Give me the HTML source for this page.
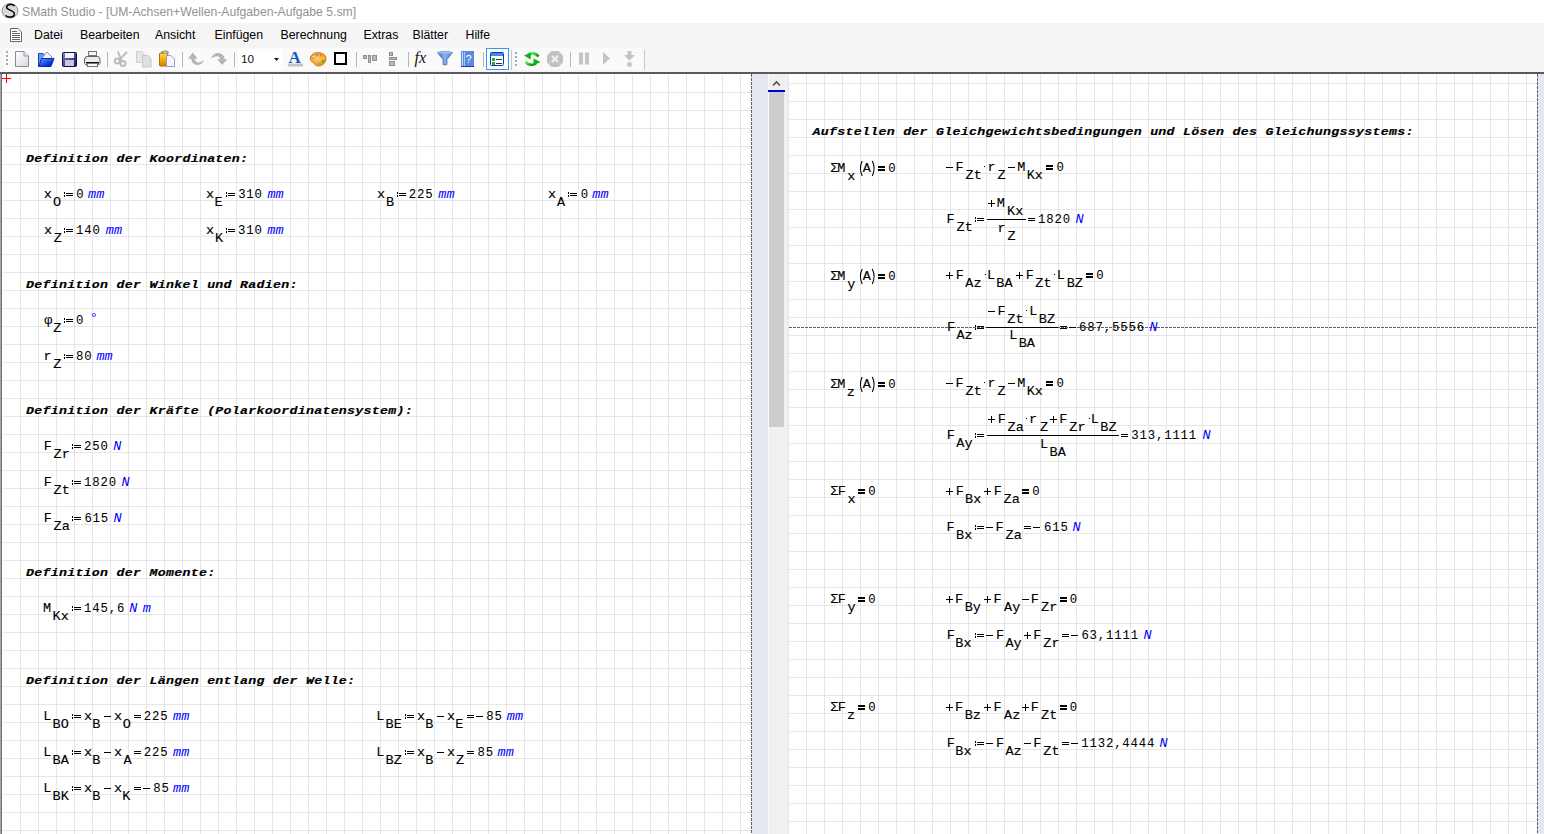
<!DOCTYPE html>
<html><head><meta charset="utf-8">
<style>
html,body{margin:0;padding:0;width:1544px;height:834px;overflow:hidden;background:#f5f5f5;}
body{position:relative;font-family:"Liberation Sans",sans-serif;}
#title{position:absolute;left:0;top:0;width:1544px;height:23px;background:#fff;}
#title .t{position:absolute;left:22px;top:5px;font-size:12.2px;color:#929292;white-space:nowrap;letter-spacing:0px;}
#menu{position:absolute;left:0;top:23px;width:1544px;height:24px;background:#f5f5f5;}
#menu span{position:absolute;top:5px;font-size:12.3px;color:#000;white-space:nowrap;}
#tbarea{position:absolute;left:0;top:46px;width:1544px;height:26px;background:#f5f5f5;}
#darkline{position:absolute;left:0;top:72px;width:1544px;height:2px;background:#5a5a5a;}
svg{position:absolute;left:0;top:0;}
.tn{font-family:"Liberation Mono",monospace;font-size:12.3px;fill:#000;stroke:#000;stroke-width:0.12px;}
.td{font-family:"Liberation Mono",monospace;font-size:12.3px;fill:#000;stroke:#000;stroke-width:0.05px;}
.tb{font-family:"Liberation Mono",monospace;font-size:12.3px;font-weight:bold;fill:#000;}
.th{font-family:"Liberation Mono",monospace;font-size:12.3px;font-weight:bold;font-style:italic;fill:#000;stroke:#000;stroke-width:0.2px;}
.tu{font-family:"Liberation Mono",monospace;font-size:12.3px;font-style:italic;fill:#0000ff;}
.tpar{font-family:"Liberation Sans",sans-serif;font-size:12.3px;fill:#000;}
</style></head><body>
<div id="title"><div class="t">SMath Studio - [UM-Achsen+Wellen-Aufgaben-Aufgabe 5.sm]</div></div>
<div id="menu">
<span style="left:34px">Datei</span>
<span style="left:80px">Bearbeiten</span>
<span style="left:155px">Ansicht</span>
<span style="left:214.5px">Einfügen</span>
<span style="left:280.5px">Berechnung</span>
<span style="left:363.5px">Extras</span>
<span style="left:412.5px">Blätter</span>
<span style="left:465.5px">Hilfe</span>
</div>
<div id="tbarea"></div>
<svg width="1544" height="74" viewBox="0 0 1544 74" style="position:absolute;left:0;top:0">
<defs>
<linearGradient id="pg" x1="0" y1="0" x2="1" y2="1"><stop offset="0" stop-color="#ffffff"/><stop offset="1" stop-color="#d8dbe6"/></linearGradient>
<linearGradient id="fold" x1="0" y1="0" x2="1" y2="1"><stop offset="0" stop-color="#6aa0ff"/><stop offset="0.6" stop-color="#1040e0"/><stop offset="1" stop-color="#001a90"/></linearGradient>
<linearGradient id="flop" x1="0" y1="0" x2="1" y2="1"><stop offset="0" stop-color="#8a8ac8"/><stop offset="1" stop-color="#10105a"/></linearGradient>
<linearGradient id="clip" x1="0" y1="0" x2="0" y2="1"><stop offset="0" stop-color="#ffe23a"/><stop offset="1" stop-color="#e07800"/></linearGradient>
<radialGradient id="pal" cx="0.45" cy="0.45" r="0.6"><stop offset="0" stop-color="#ffd060"/><stop offset="1" stop-color="#f08a10"/></radialGradient>
<linearGradient id="fun" x1="0" y1="0" x2="1" y2="0"><stop offset="0" stop-color="#3a6cc8"/><stop offset="0.5" stop-color="#8fb0e8"/><stop offset="1" stop-color="#4a78c8"/></linearGradient>
<linearGradient id="grn" x1="0" y1="0" x2="1" y2="1"><stop offset="0" stop-color="#60ff60"/><stop offset="1" stop-color="#008a00"/></linearGradient>
</defs>
<!-- toolbar backgrounds -->
<rect x="3" y="48" width="508" height="22" rx="2" fill="#fafafa"/>
<rect x="513" y="48" width="131" height="22" rx="2" fill="#fafafa"/>
<rect x="644" y="50" width="1" height="20" fill="#c8c8c8"/>
<rect x="511" y="50" width="1" height="20" fill="#c8c8c8"/>
<!-- grip -->
<g fill="#a8a8a8"><rect x="6" y="51" width="2" height="2"/><rect x="6" y="55" width="2" height="2"/><rect x="6" y="59" width="2" height="2"/><rect x="6" y="63" width="2" height="2"/></g>
<g fill="#a8a8a8"><rect x="515" y="52" width="2" height="2"/><rect x="515" y="56" width="2" height="2"/><rect x="515" y="60" width="2" height="2"/><rect x="515" y="64" width="2" height="2"/></g>
<!-- new -->
<path d="M15.5 51.5 H24 L28.5 56 V66.5 H15.5 Z" fill="url(#pg)" stroke="#8c8c96" stroke-width="1"/>
<path d="M24 51.5 V56 H28.5" fill="#e8e8f0" stroke="#9a9aa8" stroke-width="1"/>
<!-- open -->
<path d="M38.5 53.5 H43 L44.5 55 H47 V66.5 H38.5 Z" fill="#5aa0f0" stroke="#1a40c8" stroke-width="1"/>
<path d="M41 59 L47 52 L52 57 L49 60 Z" fill="#f4f4ff" stroke="#7070d0" stroke-width="0.8"/>
<path d="M39 66.5 L41.5 58.5 H54 L51 66.5 Z" fill="url(#fold)" stroke="#0a28b0" stroke-width="1"/>
<!-- save -->
<rect x="62.5" y="52.5" width="14" height="14" rx="1" fill="url(#flop)" stroke="#101050" stroke-width="1"/>
<rect x="65" y="53" width="9" height="5" fill="#f4f4fc"/>
<rect x="65" y="60" width="9" height="6" fill="#c8c8e4"/>
<!-- print -->
<rect x="88.5" y="51.5" width="8" height="4" fill="#f4f4f4" stroke="#777" stroke-width="1"/>
<path d="M86 56.5 H98.5 L100 59 V63.5 L98.5 65 H86 L84.5 63.5 V59 Z" fill="#ececec" stroke="#666" stroke-width="1"/>
<rect x="86" y="62" width="13" height="1.6" fill="#111"/>
<rect x="87.5" y="63.5" width="10" height="3" fill="#fafafa" stroke="#777" stroke-width="1"/>
<rect x="85.5" y="58" width="1" height="1" fill="#1a9a3a"/>
<!-- separators -->
<g fill="#b8b8b8"><rect x="107" y="52" width="1" height="15"/><rect x="182" y="52" width="1" height="15"/><rect x="234" y="52" width="1" height="15"/><rect x="356" y="52" width="1" height="15"/><rect x="408" y="52" width="1" height="15"/><rect x="483" y="52" width="1" height="15"/><rect x="570" y="52" width="1" height="15"/></g>
<!-- cut (disabled) -->
<g stroke="#bcbcbc" fill="none" stroke-width="2">
<circle cx="117.3" cy="61" r="2.5"/><circle cx="123" cy="63.5" r="2.5"/>
<path d="M119.5 59.5 L127 52"/><path d="M121.5 61 L118 51.5"/>
</g>
<!-- copy (disabled) -->
<path d="M136.5 51.5 H142 L144 53.5 V62.5 H136.5 Z" fill="#e6e6e6" stroke="#cfcfcf"/>
<path d="M142.5 55.5 H148 L151 58.5 V67 H142.5 Z" fill="#e0e0e0" stroke="#c6c6c6"/>
<!-- paste -->
<rect x="159.5" y="53" width="8" height="13" rx="1" fill="url(#clip)" stroke="#b86a00" stroke-width="1"/>
<path d="M162 54 V52 Q165 50 168 52 V54" fill="none" stroke="#8080a8" stroke-width="1.2"/>
<path d="M166.5 55.5 H171 L174.5 59 V66.5 H166.5 Z" fill="#f6f6ff" stroke="#9a9ac8" stroke-width="1"/>
<!-- undo/redo (disabled) -->
<path d="M188 58.8 L192.7 52.6 L197.6 58.8 Z" fill="#b4b4b4"/>
<path d="M191 58.6 Q192 65.3 197.8 65.1 Q202.3 64.8 204.2 59 Q201.5 62.6 198 62.4 Q195.2 62.2 194.6 58.6 Z" fill="#b4b4b4"/>
<path d="M217.2 59.2 L227.2 59.2 L222.1 65 Z" fill="#b4b4b4"/>
<path d="M210.8 58.6 Q213.5 53 218.3 53.1 Q223.8 53.3 224.8 59.4 L220.4 59.4 Q219.8 56.4 217.6 56.3 Q214.6 56.2 210.8 58.6 Z" fill="#b4b4b4"/>
<!-- combo -->
<rect x="238" y="49" width="45" height="21" fill="#ffffff"/>
<text x="241" y="63" font-family="Liberation Sans" font-size="11.8" fill="#111">10</text>
<path d="M274 58 H279 L276.5 61 Z" fill="#111"/>
<!-- A -->
<rect x="288" y="63.5" width="15" height="3" fill="#c4c4c4"/>
<text x="288.5" y="63" font-family="Liberation Serif" font-weight="bold" font-size="17" fill="#1656c0">A</text>
<!-- palette -->
<path d="M318 52.5 C323 52.5 326.5 55.5 326 59.5 C325.5 63.5 322 66 318 66 C315.5 66 314.5 64 313 62.5 C311.5 61 310 60.5 310.3 58 C310.8 54.8 314 52.5 318 52.5 Z" fill="url(#pal)" stroke="#c87010" stroke-width="0.8"/>
<circle cx="313.3" cy="56.5" r="1.2" fill="#fff" stroke="#806040" stroke-width="0.5"/>
<circle cx="317" cy="54.8" r="1.1" fill="#3aa0ff"/><circle cx="320.5" cy="55.3" r="1" fill="#ff6020"/>
<circle cx="323.5" cy="58" r="1" fill="#ffe020"/><circle cx="323" cy="61.5" r="1.3" fill="#20c020"/><circle cx="319.5" cy="63.3" r="1.1" fill="#b080f0"/>
<!-- square -->
<rect x="335" y="53" width="11" height="11" fill="#fafafa" stroke="#000" stroke-width="2"/>
<!-- align h -->
<g fill="#bababa" stroke="#909090" stroke-width="1">
<rect x="363.5" y="55.5" width="3" height="3"/><rect x="368.5" y="55.5" width="2" height="7"/><rect x="372.5" y="55.5" width="4" height="5"/>
<rect x="389.5" y="52.5" width="3" height="3"/><rect x="389.5" y="57.5" width="7" height="2"/><rect x="389.5" y="61.5" width="5" height="4"/>
</g>
<!-- fx -->
<text x="414.5" y="63" font-family="Liberation Serif" font-style="italic" font-size="16" fill="#111">fx</text>
<!-- funnel -->
<path d="M437.5 52.5 Q445 50 452.5 52.5 L447 59.5 V64.5 Q445 65.5 443 64.5 V59.5 Z" fill="url(#fun)" stroke="#3a64b0" stroke-width="0.7"/>
<ellipse cx="445" cy="52.5" rx="7.3" ry="1.5" fill="#9cb8e8"/>
<!-- help book -->
<rect x="461" y="51" width="13" height="16" fill="#5a8ae0"/>
<rect x="461" y="66" width="13" height="1" fill="#1a3a90"/>
<rect x="462" y="52" width="1" height="14" fill="#c8dcff"/><rect x="464" y="52" width="1" height="14" fill="#a8c4f8"/>
<text x="465.5" y="63" font-family="Liberation Sans" font-size="11" fill="#fff">?</text>
<!-- selected button -->
<rect x="486.5" y="48.5" width="22" height="21" fill="#fdfdfd" stroke="#3399ff" stroke-width="1"/>
<rect x="490.5" y="52.5" width="13" height="13" rx="1" fill="#fff" stroke="#0a3ca8" stroke-width="1"/>
<rect x="491" y="53" width="12" height="3" fill="#3c8cf0"/>
<rect x="492" y="58" width="3" height="3" fill="#3aa03a"/><rect x="492" y="62" width="3" height="3" fill="#3aa03a"/>
<rect x="496" y="59" width="6" height="1" fill="#333"/><rect x="496" y="63" width="6" height="1" fill="#333"/>
<!-- refresh -->
<path d="M538.5 56.5 A7 6 0 0 0 528 54.5" stroke="url(#grn)" stroke-width="2.6" fill="none"/>
<path d="M524 55.5 L531 52.5 L530.5 59.5 Z" fill="#10b010"/>
<path d="M525.5 61.5 A7 6 0 0 0 536 63.5" stroke="url(#grn)" stroke-width="2.6" fill="none"/>
<path d="M540.5 62 L533.5 65.5 L533.5 58.5 Z" fill="#10b010"/>
<!-- stop (disabled) -->
<path d="M551.5 51 H558.5 L563 55.5 V62.5 L558.5 67 H551.5 L547 62.5 V55.5 Z" fill="#c2c2c2"/>
<path d="M552 56 L558 62 M558 56 L552 62" stroke="#f0f0f0" stroke-width="2.2"/>
<!-- pause -->
<rect x="579" y="52.5" width="4" height="12" fill="#c4c4c4"/><rect x="585" y="52.5" width="4" height="12" fill="#c4c4c4"/>
<!-- play -->
<path d="M603 52 L610 58.5 L603 64.8 Z" fill="#c4c4c4"/>
<!-- step -->
<path d="M627.5 51 H631.5 V55 H635 L629.5 60.8 L624 55 H627.5 Z" fill="#c4c4c4"/>
<circle cx="629.5" cy="64.5" r="2.4" fill="#c4c4c4"/>
<!-- S logo -->
<ellipse cx="10" cy="10.8" rx="8" ry="7.2" fill="#dadada" stroke="#8a8a8a" stroke-width="0.9"/>
<path d="M14.6 6.2 C13.2 3.9 7.2 3.9 6.6 7.2 C6.1 10 14.4 10.3 14.4 13.9 C14.4 17.6 7.4 17.9 5.6 15.4" stroke="#000" stroke-width="1.5" fill="none"/>
<!-- menu doc icon -->
<path d="M10.5 28.5 H18 L21.5 32 V41.5 H10.5 Z" fill="#fff" stroke="#666" stroke-width="1"/>
<g fill="#666"><rect x="12" y="31" width="5" height="1"/><rect x="12" y="33" width="8" height="1"/><rect x="12" y="35" width="8" height="1"/><rect x="12" y="37" width="8" height="1"/><rect x="12" y="39" width="8" height="1"/></g>
</svg>

<div id="darkline"></div>
<svg width="1544" height="834" viewBox="0 0 1544 834">
<defs>
<pattern id="gridL" patternUnits="userSpaceOnUse" x="2" y="74" width="18" height="18">
<rect x="0" y="0" width="18" height="1" fill="#e6e6e6"/><rect x="0" y="0" width="1" height="18" fill="#e6e6e6"/>
</pattern>
<pattern id="gridR" patternUnits="userSpaceOnUse" x="788" y="83" width="18" height="18">
<rect x="0" y="0" width="18" height="1" fill="#e6e6e6"/><rect x="0" y="0" width="1" height="18" fill="#e6e6e6"/>
</pattern>
<pattern id="dashV" patternUnits="userSpaceOnUse" x="0" y="74" width="4" height="4">
<rect x="0" y="0" width="4" height="3" fill="#606060"/>
</pattern>
<pattern id="dashH" patternUnits="userSpaceOnUse" x="789" y="0" width="4" height="4">
<rect x="0" y="0" width="3" height="4" fill="#606060"/>
</pattern>
</defs>
<!-- panes -->
<rect x="0" y="74" width="752" height="760" fill="#fff"/>
<rect x="3" y="75" width="748" height="759" fill="url(#gridL)"/>
<rect x="0" y="74" width="1" height="760" fill="#a8a8a8"/>
<rect x="1" y="74" width="1" height="760" fill="#6e6e6e"/>
<rect x="751" y="74" width="1" height="760" fill="url(#dashV)"/>
<rect x="752" y="74" width="16" height="760" fill="#e5e8ef"/>
<rect x="768" y="74" width="1" height="760" fill="#fafafa"/>
<rect x="769" y="74" width="20" height="760" fill="#f0f0f0"/>
<rect x="769" y="92" width="15" height="335" fill="#cdcdcd"/>
<rect x="768" y="90" width="17" height="2" fill="#0000dd"/>
<path d="M773 85.5 L776.5 82 L780 85.5" stroke="#505050" stroke-width="1.6" fill="none"/>
<rect x="789" y="74" width="748" height="760" fill="#fff"/>
<rect x="788" y="74" width="749" height="760" fill="url(#gridR)"/>
<rect x="1537" y="74" width="1" height="760" fill="url(#dashV)"/>
<rect x="1538" y="74" width="6" height="760" fill="#e5e8ef"/>
<rect x="789" y="327" width="748" height="1" fill="url(#dashH)"/>
<!-- left cross -->
<rect x="2" y="78" width="9" height="1" fill="#ff0000"/>
<rect x="6" y="74" width="1" height="9" fill="#ff0000"/>
<g id="doc">
<text class="th" x="0.00 7.62 15.25 22.87 30.49 38.12 45.74 53.36 60.99 68.61 76.23 83.86 91.48 99.11 106.73 114.35 121.98 129.60 137.22 144.85 152.47 160.09 167.72 175.34 182.96 190.59 198.21" y="0" transform="translate(26.01 162.00) scale(1.080 0.920)">Definition der Koordinaten:</text>
<text class="th" x="0.00 7.62 15.25 22.87 30.49 38.12 45.74 53.36 60.99 68.61 76.23 83.86 91.48 99.11 106.73 114.35 121.98 129.60 137.22 144.85 152.47 160.09 167.72 175.34 182.96 190.59 198.21 205.83 213.46 221.08 228.70 236.33 243.95" y="0" transform="translate(26.01 288.00) scale(1.080 0.920)">Definition der Winkel und Radien:</text>
<text class="th" x="0.00 7.62 15.25 22.87 30.49 38.12 45.74 53.36 60.99 68.61 76.23 83.86 91.48 99.11 106.73 114.35 121.98 129.60 137.22 144.85 152.47 160.09 167.72 175.34 182.96 190.59 198.21 205.83 213.46 221.08 228.70 236.33 243.95 251.57 259.20 266.82 274.44 282.07 289.69 297.32 304.94 312.56 320.19 327.81 335.43 343.06 350.68" y="0" transform="translate(26.01 414.00) scale(1.080 0.920)">Definition der Kräfte (Polarkoordinatensystem):</text>
<text class="th" x="0.00 7.62 15.25 22.87 30.49 38.12 45.74 53.36 60.99 68.61 76.23 83.86 91.48 99.11 106.73 114.35 121.98 129.60 137.22 144.85 152.47 160.09 167.72" y="0" transform="translate(26.01 576.00) scale(1.080 0.920)">Definition der Momente:</text>
<text class="th" x="0.00 7.62 15.25 22.87 30.49 38.12 45.74 53.36 60.99 68.61 76.23 83.86 91.48 99.11 106.73 114.35 121.98 129.60 137.22 144.85 152.47 160.09 167.72 175.34 182.96 190.59 198.21 205.83 213.46 221.08 228.70 236.33 243.95 251.57 259.20 266.82 274.44 282.07 289.69 297.32" y="0" transform="translate(26.01 684.00) scale(1.080 0.920)">Definition der Längen entlang der Welle:</text>
<text class="tn" x="0.00" y="0" transform="translate(43.78 198.00) scale(1.100 1.000)">x</text>
<text class="tn" x="0.00" y="0" transform="translate(53.03 206.00) scale(1.100 1.000)">O</text>
<rect x="64" y="192" width="1" height="2" fill="#000"/>
<rect x="64" y="195" width="1" height="2" fill="#000"/>
<rect x="66" y="193" width="7" height="1" fill="#000"/>
<rect x="66" y="195" width="7" height="1" fill="#000"/>
<text class="td" x="0.00" y="0" transform="translate(76.26 198.00) scale(1.000 1.000)">0</text>
<text class="tu" x="0.00 7.48" y="0" transform="translate(88.00 198.00) scale(1.100 1.000)">mm</text>
<text class="tn" x="0.00" y="0" transform="translate(205.88 198.00) scale(1.100 1.000)">x</text>
<text class="tn" x="0.00" y="0" transform="translate(214.43 206.00) scale(1.100 1.000)">E</text>
<rect x="226" y="192" width="1" height="2" fill="#000"/>
<rect x="226" y="195" width="1" height="2" fill="#000"/>
<rect x="228" y="193" width="7" height="1" fill="#000"/>
<rect x="228" y="195" width="7" height="1" fill="#000"/>
<text class="td" x="0.00 8.23 16.47" y="0" transform="translate(238.13 198.00) scale(1.000 1.000)">310</text>
<text class="tu" x="0.00 7.48" y="0" transform="translate(267.40 198.00) scale(1.100 1.000)">mm</text>
<text class="tn" x="0.00" y="0" transform="translate(377.08 198.00) scale(1.100 1.000)">x</text>
<text class="tn" x="0.00" y="0" transform="translate(385.93 206.00) scale(1.100 1.000)">B</text>
<rect x="397" y="192" width="1" height="2" fill="#000"/>
<rect x="397" y="195" width="1" height="2" fill="#000"/>
<rect x="399" y="193" width="7" height="1" fill="#000"/>
<rect x="399" y="195" width="7" height="1" fill="#000"/>
<text class="td" x="0.00 8.23 16.47" y="0" transform="translate(408.84 198.00) scale(1.000 1.000)">225</text>
<text class="tu" x="0.00 7.48" y="0" transform="translate(438.30 198.00) scale(1.100 1.000)">mm</text>
<text class="tn" x="0.00" y="0" transform="translate(547.88 198.00) scale(1.100 1.000)">x</text>
<text class="tn" x="0.00" y="0" transform="translate(557.00 206.00) scale(1.100 1.000)">A</text>
<rect x="568" y="192" width="1" height="2" fill="#000"/>
<rect x="568" y="195" width="1" height="2" fill="#000"/>
<rect x="570" y="193" width="7" height="1" fill="#000"/>
<rect x="570" y="195" width="7" height="1" fill="#000"/>
<text class="td" x="0.00" y="0" transform="translate(580.66 198.00) scale(1.000 1.000)">0</text>
<text class="tu" x="0.00 7.48" y="0" transform="translate(592.30 198.00) scale(1.100 1.000)">mm</text>
<text class="tn" x="0.00" y="0" transform="translate(44.08 234.00) scale(1.100 1.000)">x</text>
<text class="tn" x="0.00" y="0" transform="translate(53.82 242.00) scale(1.100 1.000)">Z</text>
<rect x="64" y="228" width="1" height="2" fill="#000"/>
<rect x="64" y="231" width="1" height="2" fill="#000"/>
<rect x="66" y="229" width="7" height="1" fill="#000"/>
<rect x="66" y="231" width="7" height="1" fill="#000"/>
<text class="td" x="0.00 8.23 16.47" y="0" transform="translate(76.11 234.00) scale(1.000 1.000)">140</text>
<text class="tu" x="0.00 7.48" y="0" transform="translate(105.70 234.00) scale(1.100 1.000)">mm</text>
<text class="tn" x="0.00" y="0" transform="translate(206.08 234.00) scale(1.100 1.000)">x</text>
<text class="tn" x="0.00" y="0" transform="translate(214.93 242.00) scale(1.100 1.000)">K</text>
<rect x="226" y="228" width="1" height="2" fill="#000"/>
<rect x="226" y="231" width="1" height="2" fill="#000"/>
<rect x="228" y="229" width="7" height="1" fill="#000"/>
<rect x="228" y="231" width="7" height="1" fill="#000"/>
<text class="td" x="0.00 8.23 16.47" y="0" transform="translate(237.93 234.00) scale(1.000 1.000)">310</text>
<text class="tu" x="0.00 7.48" y="0" transform="translate(267.30 234.00) scale(1.100 1.000)">mm</text>
<text class="tn" x="0.00" y="0" transform="translate(44.27 324.00) scale(1.100 1.000)">φ</text>
<text class="tn" x="0.00" y="0" transform="translate(53.32 332.00) scale(1.100 1.000)">Z</text>
<rect x="64" y="318" width="1" height="2" fill="#000"/>
<rect x="64" y="321" width="1" height="2" fill="#000"/>
<rect x="66" y="319" width="7" height="1" fill="#000"/>
<rect x="66" y="321" width="7" height="1" fill="#000"/>
<text class="td" x="0.00" y="0" transform="translate(76.06 324.00) scale(1.000 1.000)">0</text>
<text class="tu" x="0.00" y="0" transform="translate(89.64 322.00) scale(1.100 1.000)">°</text>
<text class="tn" x="0.00" y="0" transform="translate(43.40 360.00) scale(1.100 1.000)">r</text>
<text class="tn" x="0.00" y="0" transform="translate(53.32 368.00) scale(1.100 1.000)">Z</text>
<rect x="64" y="354" width="1" height="2" fill="#000"/>
<rect x="64" y="357" width="1" height="2" fill="#000"/>
<rect x="66" y="355" width="7" height="1" fill="#000"/>
<rect x="66" y="357" width="7" height="1" fill="#000"/>
<text class="td" x="0.00 8.23" y="0" transform="translate(76.00 360.00) scale(1.000 1.000)">80</text>
<text class="tu" x="0.00 7.48" y="0" transform="translate(96.40 360.00) scale(1.100 1.000)">mm</text>
<text class="tn" x="0.00" y="0" transform="translate(43.72 450.00) scale(1.100 1.000)">F</text>
<text class="tn" x="0.00 7.48" y="0" transform="translate(53.52 458.00) scale(1.100 1.000)">Zr</text>
<rect x="72" y="444" width="1" height="2" fill="#000"/>
<rect x="72" y="447" width="1" height="2" fill="#000"/>
<rect x="74" y="445" width="7" height="1" fill="#000"/>
<rect x="74" y="447" width="7" height="1" fill="#000"/>
<text class="td" x="0.00 8.23 16.47" y="0" transform="translate(84.04 450.00) scale(1.000 1.000)">250</text>
<text class="tu" x="0.00" y="0" transform="translate(113.32 450.00) scale(1.100 1.000)">N</text>
<text class="tn" x="0.00" y="0" transform="translate(43.72 486.00) scale(1.100 1.000)">F</text>
<text class="tn" x="0.00 7.48" y="0" transform="translate(53.52 494.00) scale(1.100 1.000)">Zt</text>
<rect x="72" y="480" width="1" height="2" fill="#000"/>
<rect x="72" y="483" width="1" height="2" fill="#000"/>
<rect x="74" y="481" width="7" height="1" fill="#000"/>
<rect x="74" y="483" width="7" height="1" fill="#000"/>
<text class="td" x="0.00 8.23 16.47 24.70" y="0" transform="translate(84.11 486.00) scale(1.000 1.000)">1820</text>
<text class="tu" x="0.00" y="0" transform="translate(121.62 486.00) scale(1.100 1.000)">N</text>
<text class="tn" x="0.00" y="0" transform="translate(43.72 522.00) scale(1.100 1.000)">F</text>
<text class="tn" x="0.00 7.48" y="0" transform="translate(53.52 530.00) scale(1.100 1.000)">Za</text>
<rect x="72" y="516" width="1" height="2" fill="#000"/>
<rect x="72" y="519" width="1" height="2" fill="#000"/>
<rect x="74" y="517" width="7" height="1" fill="#000"/>
<rect x="74" y="519" width="7" height="1" fill="#000"/>
<text class="td" x="0.00 8.23 16.47" y="0" transform="translate(84.39 522.00) scale(1.000 1.000)">615</text>
<text class="tu" x="0.00" y="0" transform="translate(113.62 522.00) scale(1.100 1.000)">N</text>
<text class="tn" x="0.00" y="0" transform="translate(42.95 612.00) scale(1.100 1.000)">M</text>
<text class="tn" x="0.00 7.48" y="0" transform="translate(52.43 620.00) scale(1.100 1.000)">Kx</text>
<rect x="72" y="606" width="1" height="2" fill="#000"/>
<rect x="72" y="609" width="1" height="2" fill="#000"/>
<rect x="74" y="607" width="7" height="1" fill="#000"/>
<rect x="74" y="609" width="7" height="1" fill="#000"/>
<text class="td" x="0.00 8.23 16.47 24.70 32.93" y="0" transform="translate(84.11 612.00) scale(1.000 1.000)">145,6</text>
<text class="tu" x="0.00" y="0" transform="translate(129.22 612.00) scale(1.100 1.000)">N</text>
<text class="tu" x="0.00" y="0" transform="translate(142.70 612.00) scale(1.100 1.000)">m</text>
<text class="tn" x="0.00" y="0" transform="translate(43.13 720.00) scale(1.100 1.000)">L</text>
<text class="tn" x="0.00 7.48" y="0" transform="translate(52.43 728.00) scale(1.100 1.000)">BO</text>
<rect x="72" y="714" width="1" height="2" fill="#000"/>
<rect x="72" y="717" width="1" height="2" fill="#000"/>
<rect x="74" y="715" width="7" height="1" fill="#000"/>
<rect x="74" y="717" width="7" height="1" fill="#000"/>
<text class="tn" x="0.00" y="0" transform="translate(83.98 720.00) scale(1.100 1.000)">x</text>
<text class="tn" x="0.00" y="0" transform="translate(92.33 728.00) scale(1.100 1.000)">B</text>
<rect x="104" y="716" width="7" height="1" fill="#000"/>
<text class="tn" x="0.00" y="0" transform="translate(113.98 720.00) scale(1.100 1.000)">x</text>
<text class="tn" x="0.00" y="0" transform="translate(122.73 728.00) scale(1.100 1.000)">O</text>
<rect x="134" y="715" width="7" height="1" fill="#000"/>
<rect x="134" y="717" width="7" height="1" fill="#000"/>
<text class="td" x="0.00 8.23 16.47" y="0" transform="translate(143.84 720.00) scale(1.000 1.000)">225</text>
<text class="tu" x="0.00 7.48" y="0" transform="translate(173.00 720.00) scale(1.100 1.000)">mm</text>
<text class="tn" x="0.00" y="0" transform="translate(376.13 720.00) scale(1.100 1.000)">L</text>
<text class="tn" x="0.00 7.48" y="0" transform="translate(385.43 728.00) scale(1.100 1.000)">BE</text>
<rect x="405" y="714" width="1" height="2" fill="#000"/>
<rect x="405" y="717" width="1" height="2" fill="#000"/>
<rect x="407" y="715" width="7" height="1" fill="#000"/>
<rect x="407" y="717" width="7" height="1" fill="#000"/>
<text class="tn" x="0.00" y="0" transform="translate(416.98 720.00) scale(1.100 1.000)">x</text>
<text class="tn" x="0.00" y="0" transform="translate(425.33 728.00) scale(1.100 1.000)">B</text>
<rect x="437" y="716" width="7" height="1" fill="#000"/>
<text class="tn" x="0.00" y="0" transform="translate(446.98 720.00) scale(1.100 1.000)">x</text>
<text class="tn" x="0.00" y="0" transform="translate(455.33 728.00) scale(1.100 1.000)">E</text>
<rect x="467" y="715" width="7" height="1" fill="#000"/>
<rect x="467" y="717" width="7" height="1" fill="#000"/>
<rect x="476" y="716" width="7" height="1" fill="#000"/>
<text class="td" x="0.00 8.23" y="0" transform="translate(486.20 720.00) scale(1.000 1.000)">85</text>
<text class="tu" x="0.00 7.48" y="0" transform="translate(506.80 720.00) scale(1.100 1.000)">mm</text>
<text class="tn" x="0.00" y="0" transform="translate(43.13 756.00) scale(1.100 1.000)">L</text>
<text class="tn" x="0.00 7.48" y="0" transform="translate(52.43 764.00) scale(1.100 1.000)">BA</text>
<rect x="72" y="750" width="1" height="2" fill="#000"/>
<rect x="72" y="753" width="1" height="2" fill="#000"/>
<rect x="74" y="751" width="7" height="1" fill="#000"/>
<rect x="74" y="753" width="7" height="1" fill="#000"/>
<text class="tn" x="0.00" y="0" transform="translate(83.98 756.00) scale(1.100 1.000)">x</text>
<text class="tn" x="0.00" y="0" transform="translate(92.33 764.00) scale(1.100 1.000)">B</text>
<rect x="104" y="752" width="7" height="1" fill="#000"/>
<text class="tn" x="0.00" y="0" transform="translate(113.98 756.00) scale(1.100 1.000)">x</text>
<text class="tn" x="0.00" y="0" transform="translate(123.40 764.00) scale(1.100 1.000)">A</text>
<rect x="134" y="751" width="7" height="1" fill="#000"/>
<rect x="134" y="753" width="7" height="1" fill="#000"/>
<text class="td" x="0.00 8.23 16.47" y="0" transform="translate(143.84 756.00) scale(1.000 1.000)">225</text>
<text class="tu" x="0.00 7.48" y="0" transform="translate(173.00 756.00) scale(1.100 1.000)">mm</text>
<text class="tn" x="0.00" y="0" transform="translate(376.13 756.00) scale(1.100 1.000)">L</text>
<text class="tn" x="0.00 7.48" y="0" transform="translate(385.43 764.00) scale(1.100 1.000)">BZ</text>
<rect x="405" y="750" width="1" height="2" fill="#000"/>
<rect x="405" y="753" width="1" height="2" fill="#000"/>
<rect x="407" y="751" width="7" height="1" fill="#000"/>
<rect x="407" y="753" width="7" height="1" fill="#000"/>
<text class="tn" x="0.00" y="0" transform="translate(416.98 756.00) scale(1.100 1.000)">x</text>
<text class="tn" x="0.00" y="0" transform="translate(425.33 764.00) scale(1.100 1.000)">B</text>
<rect x="437" y="752" width="7" height="1" fill="#000"/>
<text class="tn" x="0.00" y="0" transform="translate(446.98 756.00) scale(1.100 1.000)">x</text>
<text class="tn" x="0.00" y="0" transform="translate(455.92 764.00) scale(1.100 1.000)">Z</text>
<rect x="467" y="751" width="7" height="1" fill="#000"/>
<rect x="467" y="753" width="7" height="1" fill="#000"/>
<text class="td" x="0.00 8.23" y="0" transform="translate(477.50 756.00) scale(1.000 1.000)">85</text>
<text class="tu" x="0.00 7.48" y="0" transform="translate(497.50 756.00) scale(1.100 1.000)">mm</text>
<text class="tn" x="0.00" y="0" transform="translate(43.13 792.00) scale(1.100 1.000)">L</text>
<text class="tn" x="0.00 7.48" y="0" transform="translate(52.43 800.00) scale(1.100 1.000)">BK</text>
<rect x="72" y="786" width="1" height="2" fill="#000"/>
<rect x="72" y="789" width="1" height="2" fill="#000"/>
<rect x="74" y="787" width="7" height="1" fill="#000"/>
<rect x="74" y="789" width="7" height="1" fill="#000"/>
<text class="tn" x="0.00" y="0" transform="translate(83.98 792.00) scale(1.100 1.000)">x</text>
<text class="tn" x="0.00" y="0" transform="translate(92.33 800.00) scale(1.100 1.000)">B</text>
<rect x="104" y="788" width="7" height="1" fill="#000"/>
<text class="tn" x="0.00" y="0" transform="translate(113.98 792.00) scale(1.100 1.000)">x</text>
<text class="tn" x="0.00" y="0" transform="translate(122.33 800.00) scale(1.100 1.000)">K</text>
<rect x="134" y="787" width="7" height="1" fill="#000"/>
<rect x="134" y="789" width="7" height="1" fill="#000"/>
<rect x="143" y="788" width="7" height="1" fill="#000"/>
<text class="td" x="0.00 8.23" y="0" transform="translate(153.20 792.00) scale(1.000 1.000)">85</text>
<text class="tu" x="0.00 7.48" y="0" transform="translate(173.00 792.00) scale(1.100 1.000)">mm</text>
<text class="th" x="0.00 7.62 15.25 22.87 30.49 38.12 45.74 53.36 60.99 68.61 76.23 83.86 91.48 99.11 106.73 114.35 121.98 129.60 137.22 144.85 152.47 160.09 167.72 175.34 182.96 190.59 198.21 205.83 213.46 221.08 228.70 236.33 243.95 251.57 259.20 266.82 274.44 282.07 289.69 297.32 304.94 312.56 320.19 327.81 335.43 343.06 350.68 358.30 365.93 373.55 381.17 388.80 396.42 404.04 411.67 419.29 426.91 434.54 442.16 449.78 457.41 465.03 472.65 480.28 487.90 495.53 503.15 510.77 518.40 526.02 533.64 541.27 548.89" y="0" transform="translate(812.58 135.00) scale(1.080 0.920)">Aufstellen der Gleichgewichtsbedingungen und Lösen des Gleichungssystems:</text>
<text class="tn" x="0.00" y="0" transform="translate(830.29 172.00) scale(1.100 1.000)">Σ</text>
<text class="tn" x="0.00" y="0" transform="translate(837.15 172.00) scale(1.100 1.000)">M</text>
<text class="tn" x="0.00" y="0" transform="translate(847.18 180.00) scale(1.100 1.000)">x</text>
<path d="M862.2 161 Q858.6 168.5 862.2 176" stroke="#000" stroke-width="1.1" fill="none"/>
<text class="tn" x="0.00" y="0" transform="translate(862.80 172.00) scale(1.100 1.000)">A</text>
<path d="M872.3 161 Q875.9 168.5 872.3 176" stroke="#000" stroke-width="1.1" fill="none"/>
<rect x="878" y="166" width="7" height="2" fill="#000"/>
<rect x="878" y="169" width="7" height="2" fill="#000"/>
<text class="td" x="0.00" y="0" transform="translate(888.26 172.00) scale(1.000 1.000)">0</text>
<rect x="946" y="167" width="7" height="1" fill="#000"/>
<text class="tn" x="0.00" y="0" transform="translate(955.52 171.00) scale(1.100 1.000)">F</text>
<text class="tn" x="0.00 7.48" y="0" transform="translate(965.52 179.00) scale(1.100 1.000)">Zt</text>
<rect x="984" y="166" width="1" height="1" fill="#000"/>
<text class="tn" x="0.00" y="0" transform="translate(987.40 171.00) scale(1.100 1.000)">r</text>
<text class="tn" x="0.00" y="0" transform="translate(997.52 179.00) scale(1.100 1.000)">Z</text>
<rect x="1008" y="167" width="7" height="1" fill="#000"/>
<text class="tn" x="0.00" y="0" transform="translate(1017.15 171.00) scale(1.100 1.000)">M</text>
<text class="tn" x="0.00 7.48" y="0" transform="translate(1026.63 179.00) scale(1.100 1.000)">Kx</text>
<rect x="1046" y="165" width="7" height="2" fill="#000"/>
<rect x="1046" y="168" width="7" height="2" fill="#000"/>
<text class="td" x="0.00" y="0" transform="translate(1056.56 171.00) scale(1.000 1.000)">0</text>
<text class="tn" x="0.00" y="0" transform="translate(946.52 223.00) scale(1.100 1.000)">F</text>
<text class="tn" x="0.00 7.48" y="0" transform="translate(956.52 231.00) scale(1.100 1.000)">Zt</text>
<rect x="975" y="217" width="1" height="2" fill="#000"/>
<rect x="975" y="220" width="1" height="2" fill="#000"/>
<rect x="977" y="218" width="7" height="1" fill="#000"/>
<rect x="977" y="220" width="7" height="1" fill="#000"/>
<rect x="987" y="219" width="39" height="1" fill="#000"/>
<rect x="988" y="203" width="7" height="1" fill="#000"/>
<rect x="991" y="200" width="1" height="7" fill="#000"/>
<text class="tn" x="0.00" y="0" transform="translate(996.65 207.00) scale(1.100 1.000)">M</text>
<text class="tn" x="0.00 7.48" y="0" transform="translate(1006.93 215.00) scale(1.100 1.000)">Kx</text>
<text class="tn" x="0.00" y="0" transform="translate(997.40 231.50) scale(1.100 1.000)">r</text>
<text class="tn" x="0.00" y="0" transform="translate(1007.52 239.50) scale(1.100 1.000)">Z</text>
<rect x="1028" y="218" width="7" height="1" fill="#000"/>
<rect x="1028" y="220" width="7" height="1" fill="#000"/>
<text class="td" x="0.00 8.23 16.47 24.70" y="0" transform="translate(1038.11 223.00) scale(1.000 1.000)">1820</text>
<text class="tu" x="0.00" y="0" transform="translate(1075.42 223.00) scale(1.100 1.000)">N</text>
<text class="tn" x="0.00" y="0" transform="translate(830.29 280.00) scale(1.100 1.000)">Σ</text>
<text class="tn" x="0.00" y="0" transform="translate(837.15 280.00) scale(1.100 1.000)">M</text>
<text class="tn" x="0.00" y="0" transform="translate(847.36 288.00) scale(1.100 1.000)">y</text>
<path d="M862.2 269 Q858.6 276.5 862.2 284" stroke="#000" stroke-width="1.1" fill="none"/>
<text class="tn" x="0.00" y="0" transform="translate(862.80 280.00) scale(1.100 1.000)">A</text>
<path d="M872.3 269 Q875.9 276.5 872.3 284" stroke="#000" stroke-width="1.1" fill="none"/>
<rect x="878" y="274" width="7" height="2" fill="#000"/>
<rect x="878" y="277" width="7" height="2" fill="#000"/>
<text class="td" x="0.00" y="0" transform="translate(888.26 280.00) scale(1.000 1.000)">0</text>
<rect x="946" y="275" width="7" height="1" fill="#000"/>
<rect x="949" y="272" width="1" height="7" fill="#000"/>
<text class="tn" x="0.00" y="0" transform="translate(955.72 279.00) scale(1.100 1.000)">F</text>
<text class="tn" x="0.00 7.48" y="0" transform="translate(965.30 287.00) scale(1.100 1.000)">Az</text>
<rect x="985" y="274" width="1" height="1" fill="#000"/>
<text class="tn" x="0.00" y="0" transform="translate(986.93 279.00) scale(1.100 1.000)">L</text>
<text class="tn" x="0.00 7.48" y="0" transform="translate(996.23 287.00) scale(1.100 1.000)">BA</text>
<rect x="1016" y="275" width="7" height="1" fill="#000"/>
<rect x="1019" y="272" width="1" height="7" fill="#000"/>
<text class="tn" x="0.00" y="0" transform="translate(1025.72 279.00) scale(1.100 1.000)">F</text>
<text class="tn" x="0.00 7.48" y="0" transform="translate(1035.32 287.00) scale(1.100 1.000)">Zt</text>
<rect x="1054" y="274" width="1" height="1" fill="#000"/>
<text class="tn" x="0.00" y="0" transform="translate(1056.83 279.00) scale(1.100 1.000)">L</text>
<text class="tn" x="0.00 7.48" y="0" transform="translate(1066.63 287.00) scale(1.100 1.000)">BZ</text>
<rect x="1086" y="273" width="7" height="2" fill="#000"/>
<rect x="1086" y="276" width="7" height="2" fill="#000"/>
<text class="td" x="0.00" y="0" transform="translate(1096.26 279.00) scale(1.000 1.000)">0</text>
<text class="tn" x="0.00" y="0" transform="translate(946.92 331.00) scale(1.100 1.000)">F</text>
<text class="tn" x="0.00 7.48" y="0" transform="translate(956.40 339.00) scale(1.100 1.000)">Az</text>
<rect x="975" y="325" width="1" height="2" fill="#000"/>
<rect x="975" y="328" width="1" height="2" fill="#000"/>
<rect x="977" y="326" width="7" height="1" fill="#000"/>
<rect x="977" y="328" width="7" height="1" fill="#000"/>
<rect x="987" y="327" width="71" height="1" fill="#000"/>
<rect x="988" y="311" width="7" height="1" fill="#000"/>
<text class="tn" x="0.00" y="0" transform="translate(997.52 315.00) scale(1.100 1.000)">F</text>
<text class="tn" x="0.00 7.48" y="0" transform="translate(1007.32 323.00) scale(1.100 1.000)">Zt</text>
<rect x="1026" y="310" width="1" height="1" fill="#000"/>
<text class="tn" x="0.00" y="0" transform="translate(1029.33 315.00) scale(1.100 1.000)">L</text>
<text class="tn" x="0.00 7.48" y="0" transform="translate(1038.73 323.00) scale(1.100 1.000)">BZ</text>
<text class="tn" x="0.00" y="0" transform="translate(1009.23 339.00) scale(1.100 1.000)">L</text>
<text class="tn" x="0.00 7.48" y="0" transform="translate(1018.63 347.00) scale(1.100 1.000)">BA</text>
<rect x="1060" y="326" width="7" height="1" fill="#000"/>
<rect x="1060" y="328" width="7" height="1" fill="#000"/>
<rect x="1069" y="327" width="7" height="1" fill="#000"/>
<text class="td" x="0.00 8.23 16.47 24.70 32.93 41.17 49.40 57.63" y="0" transform="translate(1079.09 331.00) scale(1.000 1.000)">687,5556</text>
<text class="tu" x="0.00" y="0" transform="translate(1149.62 331.00) scale(1.100 1.000)">N</text>
<text class="tn" x="0.00" y="0" transform="translate(830.29 388.00) scale(1.100 1.000)">Σ</text>
<text class="tn" x="0.00" y="0" transform="translate(837.15 388.00) scale(1.100 1.000)">M</text>
<text class="tn" x="0.00" y="0" transform="translate(846.83 396.00) scale(1.100 1.000)">z</text>
<path d="M862.2 377 Q858.6 384.5 862.2 392" stroke="#000" stroke-width="1.1" fill="none"/>
<text class="tn" x="0.00" y="0" transform="translate(862.80 388.00) scale(1.100 1.000)">A</text>
<path d="M872.3 377 Q875.9 384.5 872.3 392" stroke="#000" stroke-width="1.1" fill="none"/>
<rect x="878" y="382" width="7" height="2" fill="#000"/>
<rect x="878" y="385" width="7" height="2" fill="#000"/>
<text class="td" x="0.00" y="0" transform="translate(888.26 388.00) scale(1.000 1.000)">0</text>
<rect x="946" y="383" width="7" height="1" fill="#000"/>
<text class="tn" x="0.00" y="0" transform="translate(955.52 387.00) scale(1.100 1.000)">F</text>
<text class="tn" x="0.00 7.48" y="0" transform="translate(965.52 395.00) scale(1.100 1.000)">Zt</text>
<rect x="984" y="382" width="1" height="1" fill="#000"/>
<text class="tn" x="0.00" y="0" transform="translate(987.40 387.00) scale(1.100 1.000)">r</text>
<text class="tn" x="0.00" y="0" transform="translate(997.52 395.00) scale(1.100 1.000)">Z</text>
<rect x="1008" y="383" width="7" height="1" fill="#000"/>
<text class="tn" x="0.00" y="0" transform="translate(1017.15 387.00) scale(1.100 1.000)">M</text>
<text class="tn" x="0.00 7.48" y="0" transform="translate(1026.63 395.00) scale(1.100 1.000)">Kx</text>
<rect x="1046" y="381" width="7" height="2" fill="#000"/>
<rect x="1046" y="384" width="7" height="2" fill="#000"/>
<text class="td" x="0.00" y="0" transform="translate(1056.56 387.00) scale(1.000 1.000)">0</text>
<text class="tn" x="0.00" y="0" transform="translate(946.72 439.00) scale(1.100 1.000)">F</text>
<text class="tn" x="0.00 7.48" y="0" transform="translate(956.30 447.00) scale(1.100 1.000)">Ay</text>
<rect x="975" y="433" width="1" height="2" fill="#000"/>
<rect x="975" y="436" width="1" height="2" fill="#000"/>
<rect x="977" y="434" width="7" height="1" fill="#000"/>
<rect x="977" y="436" width="7" height="1" fill="#000"/>
<rect x="987" y="435" width="132" height="1" fill="#000"/>
<rect x="988" y="419" width="7" height="1" fill="#000"/>
<rect x="991" y="416" width="1" height="7" fill="#000"/>
<text class="tn" x="0.00" y="0" transform="translate(997.72 423.00) scale(1.100 1.000)">F</text>
<text class="tn" x="0.00 7.48" y="0" transform="translate(1007.52 431.00) scale(1.100 1.000)">Za</text>
<rect x="1026" y="418" width="1" height="1" fill="#000"/>
<text class="tn" x="0.00" y="0" transform="translate(1029.10 423.00) scale(1.100 1.000)">r</text>
<text class="tn" x="0.00" y="0" transform="translate(1040.12 431.00) scale(1.100 1.000)">Z</text>
<rect x="1050" y="419" width="7" height="1" fill="#000"/>
<rect x="1053" y="416" width="1" height="7" fill="#000"/>
<text class="tn" x="0.00" y="0" transform="translate(1059.32 423.00) scale(1.100 1.000)">F</text>
<text class="tn" x="0.00 7.48" y="0" transform="translate(1069.22 431.00) scale(1.100 1.000)">Zr</text>
<rect x="1089" y="418" width="1" height="1" fill="#000"/>
<text class="tn" x="0.00" y="0" transform="translate(1090.73 423.00) scale(1.100 1.000)">L</text>
<text class="tn" x="0.00 7.48" y="0" transform="translate(1100.33 431.00) scale(1.100 1.000)">BZ</text>
<text class="tn" x="0.00" y="0" transform="translate(1040.03 448.00) scale(1.100 1.000)">L</text>
<text class="tn" x="0.00 7.48" y="0" transform="translate(1049.53 456.00) scale(1.100 1.000)">BA</text>
<rect x="1121" y="434" width="7" height="1" fill="#000"/>
<rect x="1121" y="436" width="7" height="1" fill="#000"/>
<text class="td" x="0.00 8.23 16.47 24.70 32.93 41.17 49.40 57.63" y="0" transform="translate(1131.23 439.00) scale(1.000 1.000)">313,1111</text>
<text class="tu" x="0.00" y="0" transform="translate(1202.62 439.00) scale(1.100 1.000)">N</text>
<text class="tn" x="0.00" y="0" transform="translate(830.29 495.00) scale(1.100 1.000)">Σ</text>
<text class="tn" x="0.00" y="0" transform="translate(837.72 495.00) scale(1.100 1.000)">F</text>
<text class="tn" x="0.00" y="0" transform="translate(847.38 503.00) scale(1.100 1.000)">x</text>
<rect x="858" y="489" width="7" height="2" fill="#000"/>
<rect x="858" y="492" width="7" height="2" fill="#000"/>
<text class="td" x="0.00" y="0" transform="translate(868.26 495.00) scale(1.000 1.000)">0</text>
<rect x="946" y="491" width="7" height="1" fill="#000"/>
<rect x="949" y="488" width="1" height="7" fill="#000"/>
<text class="tn" x="0.00" y="0" transform="translate(955.72 495.00) scale(1.100 1.000)">F</text>
<text class="tn" x="0.00 7.48" y="0" transform="translate(964.93 503.00) scale(1.100 1.000)">Bx</text>
<rect x="984" y="491" width="7" height="1" fill="#000"/>
<rect x="987" y="488" width="1" height="7" fill="#000"/>
<text class="tn" x="0.00" y="0" transform="translate(993.72 495.00) scale(1.100 1.000)">F</text>
<text class="tn" x="0.00 7.48" y="0" transform="translate(1003.52 503.00) scale(1.100 1.000)">Za</text>
<rect x="1022" y="489" width="7" height="2" fill="#000"/>
<rect x="1022" y="492" width="7" height="2" fill="#000"/>
<text class="td" x="0.00" y="0" transform="translate(1032.26 495.00) scale(1.000 1.000)">0</text>
<text class="tn" x="0.00" y="0" transform="translate(946.62 531.00) scale(1.100 1.000)">F</text>
<text class="tn" x="0.00 7.48" y="0" transform="translate(955.93 539.00) scale(1.100 1.000)">Bx</text>
<rect x="975" y="525" width="1" height="2" fill="#000"/>
<rect x="975" y="528" width="1" height="2" fill="#000"/>
<rect x="977" y="526" width="7" height="1" fill="#000"/>
<rect x="977" y="528" width="7" height="1" fill="#000"/>
<rect x="986" y="527" width="7" height="1" fill="#000"/>
<text class="tn" x="0.00" y="0" transform="translate(995.52 531.00) scale(1.100 1.000)">F</text>
<text class="tn" x="0.00 7.48" y="0" transform="translate(1005.52 539.00) scale(1.100 1.000)">Za</text>
<rect x="1024" y="526" width="7" height="1" fill="#000"/>
<rect x="1024" y="528" width="7" height="1" fill="#000"/>
<rect x="1033" y="527" width="7" height="1" fill="#000"/>
<text class="td" x="0.00 8.23 16.47" y="0" transform="translate(1044.09 531.00) scale(1.000 1.000)">615</text>
<text class="tu" x="0.00" y="0" transform="translate(1072.62 531.00) scale(1.100 1.000)">N</text>
<text class="tn" x="0.00" y="0" transform="translate(830.29 603.00) scale(1.100 1.000)">Σ</text>
<text class="tn" x="0.00" y="0" transform="translate(837.72 603.00) scale(1.100 1.000)">F</text>
<text class="tn" x="0.00" y="0" transform="translate(847.56 611.00) scale(1.100 1.000)">y</text>
<rect x="858" y="597" width="7" height="2" fill="#000"/>
<rect x="858" y="600" width="7" height="2" fill="#000"/>
<text class="td" x="0.00" y="0" transform="translate(868.26 603.00) scale(1.000 1.000)">0</text>
<rect x="946" y="599" width="7" height="1" fill="#000"/>
<rect x="949" y="596" width="1" height="7" fill="#000"/>
<text class="tn" x="0.00" y="0" transform="translate(955.12 603.00) scale(1.100 1.000)">F</text>
<text class="tn" x="0.00 7.48" y="0" transform="translate(964.63 611.00) scale(1.100 1.000)">By</text>
<rect x="984" y="599" width="7" height="1" fill="#000"/>
<rect x="987" y="596" width="1" height="7" fill="#000"/>
<text class="tn" x="0.00" y="0" transform="translate(993.62 603.00) scale(1.100 1.000)">F</text>
<text class="tn" x="0.00 7.48" y="0" transform="translate(1004.00 611.00) scale(1.100 1.000)">Ay</text>
<rect x="1022" y="599" width="7" height="1" fill="#000"/>
<text class="tn" x="0.00" y="0" transform="translate(1030.72 603.00) scale(1.100 1.000)">F</text>
<text class="tn" x="0.00 7.48" y="0" transform="translate(1041.02 611.00) scale(1.100 1.000)">Zr</text>
<rect x="1060" y="597" width="7" height="2" fill="#000"/>
<rect x="1060" y="600" width="7" height="2" fill="#000"/>
<text class="td" x="0.00" y="0" transform="translate(1069.86 603.00) scale(1.000 1.000)">0</text>
<text class="tn" x="0.00" y="0" transform="translate(946.72 639.00) scale(1.100 1.000)">F</text>
<text class="tn" x="0.00 7.48" y="0" transform="translate(955.33 647.00) scale(1.100 1.000)">Bx</text>
<rect x="975" y="633" width="1" height="2" fill="#000"/>
<rect x="975" y="636" width="1" height="2" fill="#000"/>
<rect x="977" y="634" width="7" height="1" fill="#000"/>
<rect x="977" y="636" width="7" height="1" fill="#000"/>
<rect x="986" y="635" width="7" height="1" fill="#000"/>
<text class="tn" x="0.00" y="0" transform="translate(995.92 639.00) scale(1.100 1.000)">F</text>
<text class="tn" x="0.00 7.48" y="0" transform="translate(1005.40 647.00) scale(1.100 1.000)">Ay</text>
<rect x="1024" y="635" width="7" height="1" fill="#000"/>
<rect x="1027" y="632" width="1" height="7" fill="#000"/>
<text class="tn" x="0.00" y="0" transform="translate(1033.22 639.00) scale(1.100 1.000)">F</text>
<text class="tn" x="0.00 7.48" y="0" transform="translate(1043.32 647.00) scale(1.100 1.000)">Zr</text>
<rect x="1062" y="634" width="7" height="1" fill="#000"/>
<rect x="1062" y="636" width="7" height="1" fill="#000"/>
<rect x="1071" y="635" width="7" height="1" fill="#000"/>
<text class="td" x="0.00 8.23 16.47 24.70 32.93 41.17 49.40" y="0" transform="translate(1081.39 639.00) scale(1.000 1.000)">63,1111</text>
<text class="tu" x="0.00" y="0" transform="translate(1143.62 639.00) scale(1.100 1.000)">N</text>
<text class="tn" x="0.00" y="0" transform="translate(830.29 711.00) scale(1.100 1.000)">Σ</text>
<text class="tn" x="0.00" y="0" transform="translate(837.72 711.00) scale(1.100 1.000)">F</text>
<text class="tn" x="0.00" y="0" transform="translate(847.03 719.00) scale(1.100 1.000)">z</text>
<rect x="858" y="705" width="7" height="2" fill="#000"/>
<rect x="858" y="708" width="7" height="2" fill="#000"/>
<text class="td" x="0.00" y="0" transform="translate(868.26 711.00) scale(1.000 1.000)">0</text>
<rect x="946" y="707" width="7" height="1" fill="#000"/>
<rect x="949" y="704" width="1" height="7" fill="#000"/>
<text class="tn" x="0.00" y="0" transform="translate(955.12 711.00) scale(1.100 1.000)">F</text>
<text class="tn" x="0.00 7.48" y="0" transform="translate(964.63 719.00) scale(1.100 1.000)">Bz</text>
<rect x="984" y="707" width="7" height="1" fill="#000"/>
<rect x="987" y="704" width="1" height="7" fill="#000"/>
<text class="tn" x="0.00" y="0" transform="translate(993.62 711.00) scale(1.100 1.000)">F</text>
<text class="tn" x="0.00 7.48" y="0" transform="translate(1004.00 719.00) scale(1.100 1.000)">Az</text>
<rect x="1022" y="707" width="7" height="1" fill="#000"/>
<rect x="1025" y="704" width="1" height="7" fill="#000"/>
<text class="tn" x="0.00" y="0" transform="translate(1030.72 711.00) scale(1.100 1.000)">F</text>
<text class="tn" x="0.00 7.48" y="0" transform="translate(1041.02 719.00) scale(1.100 1.000)">Zt</text>
<rect x="1060" y="705" width="7" height="2" fill="#000"/>
<rect x="1060" y="708" width="7" height="2" fill="#000"/>
<text class="td" x="0.00" y="0" transform="translate(1069.86 711.00) scale(1.000 1.000)">0</text>
<text class="tn" x="0.00" y="0" transform="translate(946.72 747.00) scale(1.100 1.000)">F</text>
<text class="tn" x="0.00 7.48" y="0" transform="translate(955.33 755.00) scale(1.100 1.000)">Bx</text>
<rect x="975" y="741" width="1" height="2" fill="#000"/>
<rect x="975" y="744" width="1" height="2" fill="#000"/>
<rect x="977" y="742" width="7" height="1" fill="#000"/>
<rect x="977" y="744" width="7" height="1" fill="#000"/>
<rect x="986" y="743" width="7" height="1" fill="#000"/>
<text class="tn" x="0.00" y="0" transform="translate(995.92 747.00) scale(1.100 1.000)">F</text>
<text class="tn" x="0.00 7.48" y="0" transform="translate(1005.40 755.00) scale(1.100 1.000)">Az</text>
<rect x="1024" y="743" width="7" height="1" fill="#000"/>
<text class="tn" x="0.00" y="0" transform="translate(1033.22 747.00) scale(1.100 1.000)">F</text>
<text class="tn" x="0.00 7.48" y="0" transform="translate(1043.32 755.00) scale(1.100 1.000)">Zt</text>
<rect x="1062" y="742" width="7" height="1" fill="#000"/>
<rect x="1062" y="744" width="7" height="1" fill="#000"/>
<rect x="1071" y="743" width="7" height="1" fill="#000"/>
<text class="td" x="0.00 8.23 16.47 24.70 32.93 41.17 49.40 57.63 65.87" y="0" transform="translate(1081.21 747.00) scale(1.000 1.000)">1132,4444</text>
<text class="tu" x="0.00" y="0" transform="translate(1159.42 747.00) scale(1.100 1.000)">N</text>
</g>
</svg>
</body></html>
